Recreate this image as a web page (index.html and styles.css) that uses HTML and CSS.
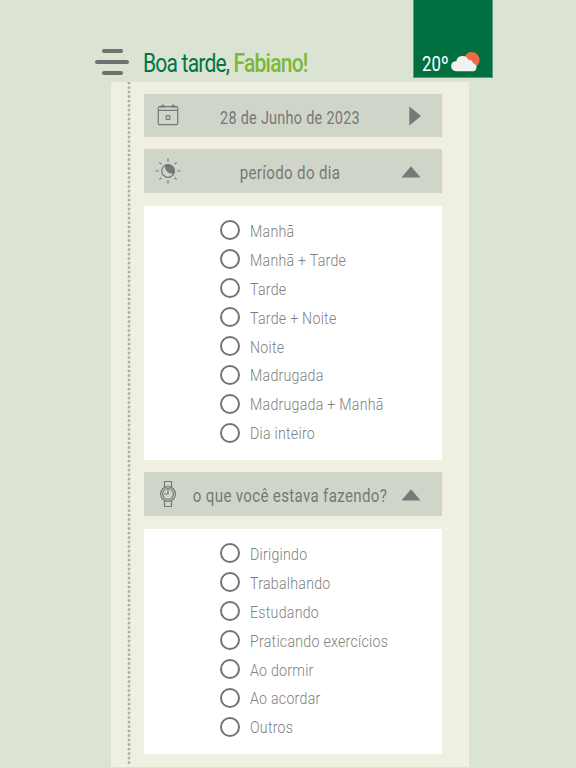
FILE: index.html
```html
<!DOCTYPE html>
<html lang="pt-BR">
<head>
  <meta charset="UTF-8" />
  <meta name="viewport" content="width=device-width, initial-scale=1.0" />
  <title>Boa tarde</title>
  <link rel="stylesheet" href="styles.css">
</head>
<body>
  <header class="header">
    <div class="menu">
      <span class="short"></span>
      <span></span>
      <span class="short"></span>
    </div>
    <h1 class="greeting"><span class="hello">Boa tarde,</span> <span class="name">Fabiano!</span></h1>
    <div class="weather">
      <span class="temp">20º</span>
      <svg class="cloud" width="30" height="20" viewBox="0 0 30 20">
        <circle cx="20.7" cy="8" r="7.9" fill="#ef6c4b" />
        <path d="M5 19.2a5 5 0 0 1-.8-9.900c.3-.1.700-.1 1.100-.1A6.300 6.300 0 0 1 17.400 8a4.200 4.200 0 0 1 4.600 3.200A4.200 4.200 0 0 1 23 19.200z" fill="#f1f1f1" />
      </svg>
    </div>
  </header>

  <main class="panel">
    <svg class="dots" width="4" height="685">
      <line x1="2" y1="1" x2="2" y2="684" />
    </svg>

    <div class="content">
      <!-- Data -->
      <div class="bar date">
        <svg class="icon" width="28" height="28" viewBox="0 0 28 28">
          <rect x="4.3" y="4.7" width="19.4" height="18" rx="1.2" />
          <path d="M4.3 8.3h19.4M7.600 5.800a1.600 1.600 0 1 1 2.500 0M18 5.800a1.600 1.600 0 1 1 2.500 0" />
          <rect x="12.2" y="13.6" width="3.6" height="3.8" rx=".5" />
        </svg>
        <span class="title t-date">28 de Junho de 2023</span>
        <svg class="arrow" width="20" height="20" viewBox="0 0 20 20"><path d="M8.3.5 20 10 8.3 19.5z" /></svg>
      </div>

      <!-- Período do dia -->
      <div class="bar">
        <svg class="icon" width="28" height="28" viewBox="0 0 28 28">
          <circle cx="14" cy="14" r="6.3" />
          <path class="solid" d="M11.7 8.3A6.3 6.3 0 0 1 20 15.8C15 17 11 13 11.7 8.3z" />
          <path d="M14 1.5v3.2M14 23.3v3.2M1.5 14h3.2M23.3 14h3.2M5.4 5.4l2 2M20.6 20.6l2 2M5.4 22.6l2-2M20.6 7.4l2-2" />
        </svg>
        <span class="title t-period">período do dia</span>
        <svg class="arrow" width="20" height="20" viewBox="0 0 20 20"><path d="M.5 16.500 10 5.300l9.500 11.200z" /></svg>
      </div>
      <div class="options">
        <label><input type="radio" name="periodo"><span>Manhã</span></label>
        <label><input type="radio" name="periodo"><span>Manhã + Tarde</span></label>
        <label><input type="radio" name="periodo"><span>Tarde</span></label>
        <label><input type="radio" name="periodo"><span>Tarde + Noite</span></label>
        <label><input type="radio" name="periodo"><span>Noite</span></label>
        <label><input type="radio" name="periodo"><span>Madrugada</span></label>
        <label><input type="radio" name="periodo"><span>Madrugada + Manhã</span></label>
        <label><input type="radio" name="periodo"><span>Dia inteiro</span></label>
      </div>

      <!-- Atividade -->
      <div class="bar">
        <svg class="icon" width="28" height="28" viewBox="0 0 28 28">
          <circle cx="14" cy="14" r="7.4" />
          <circle cx="14" cy="14" r="5.4" />
          <path d="M10.5 7.3V1.5h7v5.8M10.5 20.7v5.8h7v-5.8M14 9.800V14h-4" />
        </svg>
        <span class="title t-doing">o que você estava fazendo?</span>
        <svg class="arrow" width="20" height="20" viewBox="0 0 20 20"><path d="M.5 16.500 10 5.300l9.500 11.200z" /></svg>
      </div>
      <div class="options last">
        <label><input type="radio" name="atividade"><span>Dirigindo</span></label>
        <label><input type="radio" name="atividade"><span>Trabalhando</span></label>
        <label><input type="radio" name="atividade"><span>Estudando</span></label>
        <label><input type="radio" name="atividade"><span>Praticando exercícios</span></label>
        <label><input type="radio" name="atividade"><span>Ao dormir</span></label>
        <label><input type="radio" name="atividade"><span>Ao acordar</span></label>
        <label><input type="radio" name="atividade"><span>Outros</span></label>
      </div>
    </div>
  </main>
</body>
</html>
```

FILE: styles.css
```css
* {
  box-sizing: border-box;
}
body {
  margin: 0;
  width: 576px;
  height: 768px;
  overflow: hidden;
  background: #dbe4d3;
  font-family: Roboto, "Liberation Sans", sans-serif;
  color: #777877;
}

/* Header */
.header {
  display: flex;
  height: 82px;
  padding-left: 95px;
}
.menu {
  display: flex;
  flex-direction: column;
  align-items: center;
  gap: 7px;
  width: 34px;
  padding-top: 49px;
}
.menu span {
  width: 34px;
  height: 4px;
  border-radius: 2px;
  background: #6f7070;
}
.menu .short {
  width: 21px;
}
.greeting {
  width: 270px;
  margin: 46px 0 0 14px;
  font-size: 26px;
  line-height: 34px;
  font-weight: 400;
  letter-spacing: -1px;
  white-space: nowrap;
  transform: scaleX(0.81);
  transform-origin: left;
}
.hello {
  color: #047444;
}
.name {
  color: #7db938;
  font-weight: 500;
}
.weather {
  display: flex;
  align-items: flex-end;
  width: 80px;
  height: 78px;
  padding: 0 0 5px 8px;
  background: #007041;
  border: 1px solid #5f9c7c;
  border-top: 0;
}
.temp {
  width: 29px;
  color: #fff;
  font-size: 21px;
  line-height: 16px;
  transform: scaleX(0.8);
  transform-origin: left;
}

/* Panel */
.panel {
  display: flex;
  width: 358px;
  height: 685px;
  margin-left: 111px;
  padding-left: 16px;
  background: #eff0e1;
}
.dots line {
  stroke: #b0b1af;
  stroke-width: 3;
  stroke-linecap: round;
  stroke-dasharray: 0 4.5;
}
.content {
  width: 298px;
  margin: 12px 0 0 13px;
}
.bar {
  display: flex;
  align-items: center;
  height: 44px;
  margin-bottom: 13px;
  padding: 0 21px 0 10px;
  background: #d0d5c9;
}
.bar.date {
  height: 43px;
  margin-bottom: 12px;
}
.icon {
  flex-shrink: 0;
  fill: none;
  stroke: #777877;
  stroke-width: 1.2;
}
.icon .solid {
  fill: #777877;
}
.arrow {
  flex-shrink: 0;
  fill: #777877;
}
.title {
  flex: 1;
  display: flex;
  justify-content: center;
  min-width: 0;
  margin-right: 3px;
  padding-top: 4px;
  font-size: 19px;
  line-height: 24px;
  letter-spacing: 0.4px;
  white-space: nowrap;
}
.t-date {
  transform: scaleX(0.757);
}
.t-period {
  transform: scaleX(0.795);
}
.t-doing {
  transform: scaleX(0.795);
}

/* Options */
.options {
  height: 254px;
  margin-bottom: 12px;
  padding: 10px 0 0 76px;
  background: #fff;
}
.options.last {
  height: 225px;
}
label {
  display: flex;
  align-items: center;
  height: 28.9px;
}
input[type="radio"] {
  appearance: none;
  width: 20px;
  height: 20px;
  margin: 0 10px 0 0;
  border: 2px solid #737474;
  border-radius: 50%;
}
label span {
  padding-top: 1px;
  color: #7e7f7e;
  font-size: 17px;
  font-weight: 300;
  letter-spacing: 0.3px;
  white-space: nowrap;
  transform: scaleX(0.835);
  transform-origin: left;
}
```
